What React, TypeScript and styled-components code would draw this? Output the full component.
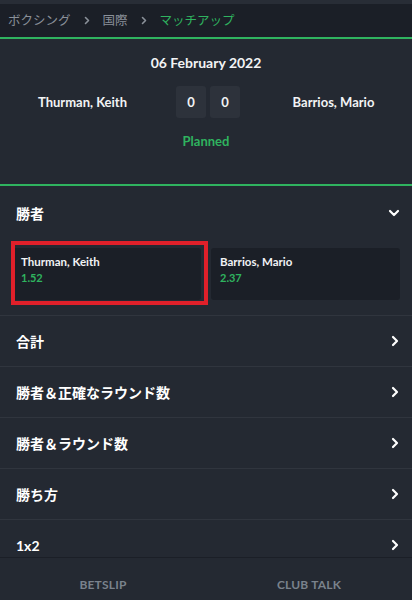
import React from "react";
import styled, { createGlobalStyle } from "styled-components";

const GlobalStyle = createGlobalStyle`
  html, body { margin: 0; padding: 0; background: #242932; }
  body { font-family: Lato, "Noto Sans CJK JP", sans-serif; color: #ffffff; }
  * { box-sizing: border-box; }
`;

const Page = styled.div`
  height: 100vh;
  display: flex;
  flex-direction: column;
  background: #242932;
  overflow: hidden;
`;

const Content = styled.div`
  flex: 1;
  overflow: hidden;
  display: flex;
  flex-direction: column;
`;

const TopStrip = styled.div`
  height: 4px;
  background: #282d36;
  flex-shrink: 0;
`;

const Breadcrumb = styled.nav`
  height: 35px;
  background: #1b1f27;
  display: flex;
  align-items: center;
  padding: 0 8px 1px 8px;
  gap: 13px;
  border-bottom: 2px solid #2fb35f;
  flex-shrink: 0;
  font-family: "Noto Sans CJK JP", sans-serif;
  font-size: 12.5px;
`;

const Crumb = styled.span<{ $active?: boolean }>`
  color: ${(p) => (p.$active ? "#2fb35f" : "#8a9099")};
  line-height: 1;
`;

const Sep = styled.span`
  display: flex;
  align-items: center;
`;

const Header = styled.section`
  height: 147px;
  border-bottom: 2px solid #2fb35f;
  display: flex;
  flex-direction: column;
  align-items: center;
  padding-top: 15px;
  flex-shrink: 0;
`;

const DateText = styled.div`
  font-size: 14px;
  font-weight: 700;
  color: #f2f3f5;
  line-height: 18px;
`;

const Matchup = styled.div`
  width: 100%;
  display: grid;
  grid-template-columns: 1fr auto 1fr;
  align-items: center;
  margin-top: 14px;
  padding-left: 4px;
`;

const Name = styled.div<{ $side: "left" | "right" }>`
  text-align: center;
  font-size: 13px;
  font-weight: 700;
  color: #f2f3f5;
  padding: ${(p) => (p.$side === "left" ? "0 15px 0 0" : "0 0 0 15px")};
`;

const Scores = styled.div`
  display: flex;
  gap: 4px;
`;

const ScoreBox = styled.div`
  width: 30px;
  height: 32px;
  background: #2d323b;
  border-radius: 3px;
  display: flex;
  align-items: center;
  justify-content: center;
  font-size: 13px;
  font-weight: 700;
  color: #f2f3f5;
`;

const Status = styled.div`
  margin-top: 15px;
  font-size: 13px;
  font-weight: 700;
  color: #2fb35f;
`;

const Market = styled.section`
  border-bottom: 1px solid #30353e;
  flex-shrink: 0;
`;

const MarketHead = styled.div`
  height: 54px;
  display: flex;
  align-items: center;
  justify-content: space-between;
  padding: 0 12px 0 16px;
`;

const Title = styled.div`
  font-family: Lato, "Noto Sans CJK JP", sans-serif;
  font-size: 14px;
  font-weight: 700;
  color: #ffffff;
`;

const Odds = styled.div`
  display: grid;
  grid-template-columns: 1fr 1fr;
  gap: 10px;
  padding: 8px 12px 15px 12px;
`;

const OddCard = styled.div<{ $highlighted?: boolean }>`
  position: relative;
  height: 52px;
  background: #1b1f27;
  border-radius: 3px;
  padding: 6px 9px;
  display: flex;
  flex-direction: column;
  ${(p) =>
    p.$highlighted
      ? `&::after {
    content: "";
    position: absolute;
    top: -7px;
    bottom: -5px;
    left: -1px;
    right: -7px;
    border: 4px solid #e0202a;
    pointer-events: none;
  }`
      : ""}
`;

const OddName = styled.div`
  font-size: 11.5px;
  font-weight: 700;
  color: #f2f3f5;
  line-height: 16px;
`;

const OddValue = styled.div`
  font-size: 11px;
  font-weight: 700;
  color: #2fb35f;
  line-height: 16px;
`;

const Row = styled.div`
  height: 51px;
  flex-shrink: 0;
  display: flex;
  align-items: center;
  justify-content: space-between;
  padding: 0 13px 0 16px;
  border-bottom: 1px solid #30353e;
`;

const TabBar = styled.footer`
  height: 43px;
  flex-shrink: 0;
  border-top: 1px solid #1b1f27;
  background: #242932;
  display: grid;
  grid-template-columns: 1fr 1fr;
`;

const Tab = styled.div`
  display: flex;
  align-items: center;
  justify-content: center;
  font-size: 12px;
  font-weight: 700;
  color: #7a828c;
  letter-spacing: 0.2px;
  padding-top: 10px;
`;

const ChevronRight = () => (
  <svg width="8" height="12" viewBox="0 0 8 12" fill="none">
    <path d="M2 2 L6 6 L2 10" stroke="#ffffff" strokeWidth="2.2" strokeLinecap="round" strokeLinejoin="round" />
  </svg>
);

const ChevronDown = () => (
  <svg width="12" height="8" viewBox="0 0 12 8" fill="none">
    <path d="M2 2 L6 6 L10 2" stroke="#ffffff" strokeWidth="2.2" strokeLinecap="round" strokeLinejoin="round" />
  </svg>
);

const CrumbChevron = () => (
  <svg width="6" height="9" viewBox="0 0 6 9" fill="none">
    <path d="M1.5 1.5 L4.5 4.5 L1.5 7.5" stroke="#8a9099" strokeWidth="1.6" strokeLinecap="round" strokeLinejoin="round" />
  </svg>
);

const rows = ["合計", "勝者＆正確なラウンド数", "勝者＆ラウンド数", "勝ち方", "1x2"];

export default function App() {
  return (
    <Page>
      <GlobalStyle />
      <Content>
        <TopStrip />
        <Breadcrumb>
          <Crumb>ボクシング</Crumb>
          <Sep>
            <CrumbChevron />
          </Sep>
          <Crumb>国際</Crumb>
          <Sep>
            <CrumbChevron />
          </Sep>
          <Crumb $active>マッチアップ</Crumb>
        </Breadcrumb>
        <Header>
          <DateText>06 February 2022</DateText>
          <Matchup>
            <Name $side="left">Thurman, Keith</Name>
            <Scores>
              <ScoreBox>0</ScoreBox>
              <ScoreBox>0</ScoreBox>
            </Scores>
            <Name $side="right">Barrios, Mario</Name>
          </Matchup>
          <Status>Planned</Status>
        </Header>
        <Market>
          <MarketHead>
            <Title>勝者</Title>
            <ChevronDown />
          </MarketHead>
          <Odds>
            <OddCard $highlighted>
              <OddName>Thurman, Keith</OddName>
              <OddValue>1.52</OddValue>
            </OddCard>
            <OddCard>
              <OddName>Barrios, Mario</OddName>
              <OddValue>2.37</OddValue>
            </OddCard>
          </Odds>
        </Market>
        {rows.map((r) => (
          <Row key={r}>
            <Title>{r}</Title>
            <ChevronRight />
          </Row>
        ))}
      </Content>
      <TabBar>
        <Tab>BETSLIP</Tab>
        <Tab>CLUB TALK</Tab>
      </TabBar>
    </Page>
  );
}
